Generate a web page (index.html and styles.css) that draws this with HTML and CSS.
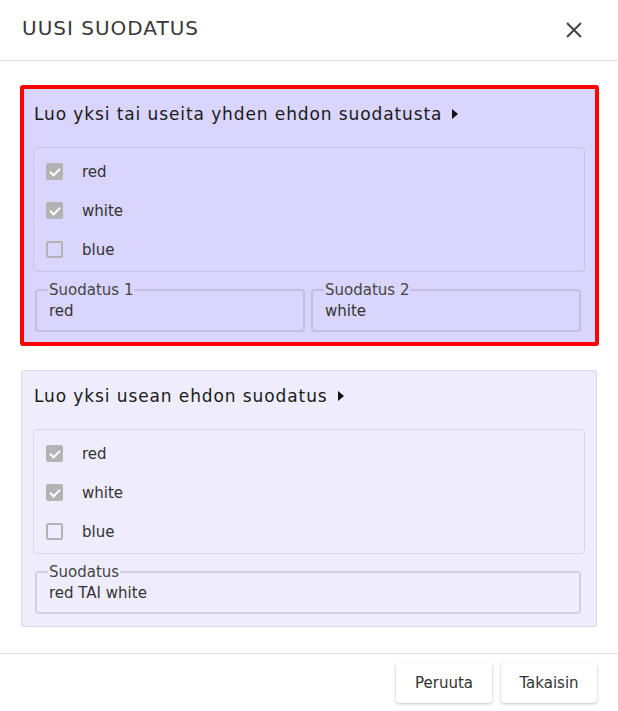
FILE: index.html
```html
<!DOCTYPE html>
<html>
<head>
    <title>Uusi suodatus</title>
    <link rel="stylesheet" href="styles.css">
</head>
<body>
    <div class="dialog">
        <div class="dialog-header">
            <h2 class="dialog-title">UUSI SUODATUS</h2>
            <button class="close-btn" aria-label="Sulje">
                <svg width="16" height="16" viewBox="0 0 16 16">
                    <path d="M1 1 L15 15 M15 1 L1 15" stroke="#444" stroke-width="2" fill="none"/>
                </svg>
            </button>
        </div>

        <div class="dialog-body">
            <div class="filter-card selected">
                <div class="card-heading">
                    Luo yksi tai useita yhden ehdon suodatusta
                    <svg class="arrow" width="6" height="10" viewBox="0 0 6 10"><path d="M0 0 L6 5 L0 10 Z" fill="#111"/></svg>
                </div>
                <div class="option-box">
                    <label class="option"><span class="check checked"></span>red</label>
                    <label class="option"><span class="check checked"></span>white</label>
                    <label class="option"><span class="check"></span>blue</label>
                </div>
                <div class="field-row">
                    <fieldset class="field">
                        <legend>Suodatus 1</legend>
                        <div class="field-value">red</div>
                    </fieldset>
                    <fieldset class="field">
                        <legend>Suodatus 2</legend>
                        <div class="field-value">white</div>
                    </fieldset>
                </div>
            </div>

            <div class="filter-card">
                <div class="card-heading">
                    Luo yksi usean ehdon suodatus
                    <svg class="arrow" width="6" height="10" viewBox="0 0 6 10"><path d="M0 0 L6 5 L0 10 Z" fill="#111"/></svg>
                </div>
                <div class="option-box">
                    <label class="option"><span class="check checked"></span>red</label>
                    <label class="option"><span class="check checked"></span>white</label>
                    <label class="option"><span class="check"></span>blue</label>
                </div>
                <div class="field-row">
                    <fieldset class="field">
                        <legend>Suodatus</legend>
                        <div class="field-value">red TAI white</div>
                    </fieldset>
                </div>
            </div>
        </div>

        <div class="dialog-footer">
            <button class="btn">Peruuta</button>
            <button class="btn">Takaisin</button>
        </div>
    </div>
</body>
</html>
```

FILE: styles.css
```css
body {
    margin: 0;
    background: #fff;
    font-family: "DejaVu Sans", "Liberation Sans", sans-serif;
    color: #333;
}
.dialog {
    width: 618px;
    height: 711px;
    display: flex;
    flex-direction: column;
}
.dialog-header {
    height: 60px;
    display: flex;
    align-items: center;
    justify-content: space-between;
    padding: 0 36px 0 22px;
    border-bottom: 1px solid #e0e0e0;
}
.dialog-title {
    margin: 0 0 5px 0;
    font-size: 20px;
    font-weight: 400;
    letter-spacing: 1px;
    color: #383838;
}
.close-btn {
    border: none;
    background: none;
    padding: 0;
    width: 16px;
    height: 16px;
    display: flex;
}
.dialog-body {
    padding: 24px 21px 0 21px;
    flex: 1;
}
.filter-card {
    background: #efedfd;
    border: 1px solid #d8d5ee;
    border-radius: 3px;
    padding: 0 11px 12px 11px;
    margin-bottom: 24px;
}
.filter-card.selected {
    background: #d9d5fd;
    border: 4px solid #ff0000;
    margin: 0 -2px 24px -1px;
    padding: 0 10px 10px 9px;
}
.card-heading {
    padding-top: 15px;
    line-height: 20px;
    height: 20px;
    margin-bottom: 23px;
    font-size: 17px;
    letter-spacing: 0.9px;
    color: #1a1a1a;
    display: flex;
    align-items: center;
    gap: 10px;
    padding-left: 1px;
}
.option-box {
    border: 1px solid #d9d6ec;
    border-radius: 4px;
    padding: 4px 0 2px 0;
}
.selected .option-box {
    border-color: #c6c2e6;
}
.option {
    height: 39px;
    display: flex;
    align-items: center;
    padding-left: 12px;
    font-size: 15px;
    color: #333;
}
.check {
    width: 17px;
    height: 17px;
    box-sizing: border-box;
    border: 2px solid #b3b3b3;
    border-radius: 2px;
    margin-right: 19px;
    position: relative;
}
.check.checked {
    background: #b3b3b3;
}
.check.checked::after {
    content: "";
    position: absolute;
    left: 4px;
    top: 1px;
    width: 4px;
    height: 8px;
    border: solid #fff;
    border-width: 0 2px 2px 0;
    transform: rotate(45deg);
}
.field-row {
    display: flex;
    gap: 6px;
    margin: 10px 4px 0 2px;
}
.field {
    flex: 1;
    margin: 0;
    border: 2px solid #d3d0e6;
    border-radius: 4px;
    padding: 3px 12px 9px 12px;
    min-width: 0;
}
.selected .field {
    border-color: #c3bfe2;
}
.field legend {
    padding: 0 1px;
    font-size: 15px;
    line-height: 16px;
    color: #444;
    margin-left: -1px;
}
.field-value {
    font-size: 15px;
    line-height: 20px;
    color: #333;
}
.dialog-footer {
    border-top: 1px solid #e0e0e0;
    height: 58px;
    display: flex;
    justify-content: flex-end;
    align-items: flex-start;
    padding: 9px 21px 0 0;
    gap: 9px;
    box-sizing: border-box;
}
.btn {
    width: 96px;
    height: 40px;
    background: #fff;
    border: none;
    border-radius: 4px;
    box-shadow: 0 1px 3px rgba(0,0,0,0.25);
    font-family: inherit;
    font-size: 15px;
    color: #333;
}
```
